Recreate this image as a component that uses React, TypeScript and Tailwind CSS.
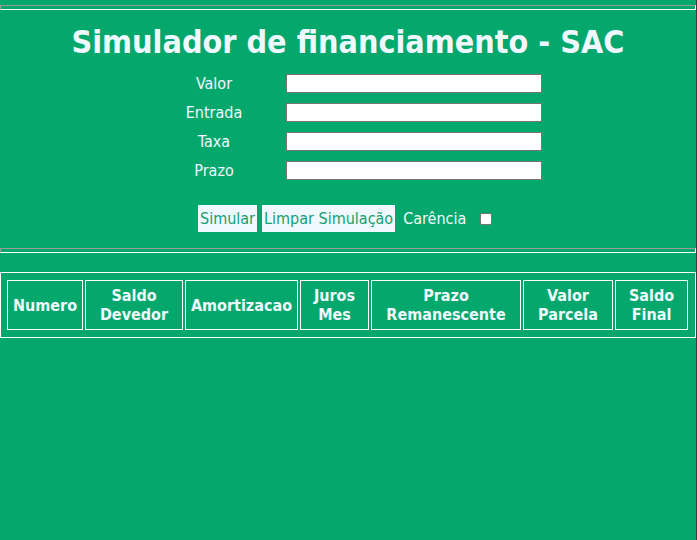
import React from "react";

const font = { fontFamily: '"DejaVu Sans Condensed", "DejaVu Sans", sans-serif' };

function Hr() {
  return (
    <div className="h-[5px] w-[696px] border-t border-l border-t-[#9a9a9a] border-l-[#9a9a9a] border-b border-r border-b-white border-r-white" />
  );
}

const headers: string[][] = [
  ["Numero"],
  ["Saldo", "Devedor"],
  ["Amortizacao"],
  ["Juros", "Mes"],
  ["Prazo", "Remanescente"],
  ["Valor", "Parcela"],
  ["Saldo", "Final"],
];
const widths = [76, 98, 113, 69, 150, 90, 73];

export default function App() {
  const fields = ["Valor", "Entrada", "Taxa", "Prazo"];
  return (
    <div className="min-h-screen bg-[#3b3d45]">
      <div className="w-[696px] h-[540px] bg-[#04a86c] text-[#f0f8ff]" style={font}>
        <div className="pt-[5px]">
          <Hr />
        </div>
        <h1 className="mt-[13px] text-center text-[32px] leading-[38px] font-bold">
          Simulador de financiamento - SAC
        </h1>
        <div className="mt-[8px] flex flex-col">
          {fields.map((f) => (
            <div key={f} className="flex h-[29px] items-center">
              <div className="w-[286px] pr-[6px] flex justify-end">
                <div className="w-[132px] text-center text-[16px] leading-[18px]">{f}</div>
              </div>
              <div className="w-[256px] h-[19px] bg-white border border-[#767676]" />
            </div>
          ))}
        </div>
        <div className="mt-[20px] flex items-center h-[27px]">
          <div className="w-[198px]" />
          <div className="h-[27px] px-[2px] flex items-center bg-[#f0f8ff] text-[#15a070] text-[16px]">
            Simular
          </div>
          <div className="w-[5px]" />
          <div className="h-[27px] px-[2px] flex items-center bg-[#f0f8ff] text-[#15a070] text-[16px]">
            Limpar Simulação
          </div>
          <div className="ml-[8px] text-[16px]">Carência</div>
          <div className="ml-[14px] w-[12px] h-[12px] bg-white border border-[#767676] rounded-[2px]" />
        </div>
        <div className="mt-[16px]">
          <Hr />
        </div>
        <div className="mt-[19px] w-[696px] border border-white px-[6px] py-[7px]">
          <div className="flex gap-[2px]">
            {headers.map((h, i) => (
              <div
                key={i}
                className="h-[50px] border border-white flex flex-col items-center justify-center font-bold text-[16px] leading-[19px]"
                style={{ width: widths[i] }}
              >
                {h.map((l) => (
                  <span key={l}>{l}</span>
                ))}
              </div>
            ))}
          </div>
        </div>
      </div>
    </div>
  );
}
